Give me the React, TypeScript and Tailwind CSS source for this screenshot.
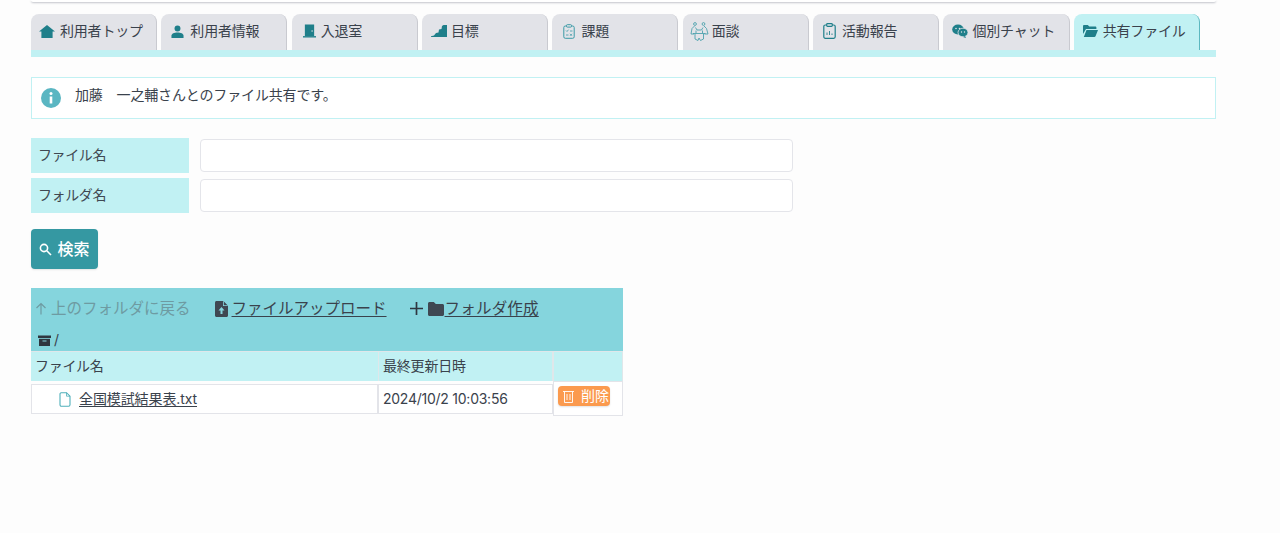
const font = { fontFamily: 'Inter, "Noto Sans CJK JP", sans-serif' };

const T = "#1f7f8a";

function Home() {
  return <svg width="16" height="13" viewBox="0 0 16 13"><path d="M8 0 16 6.500h-2.400V13H2.400V6.500H0z" fill={T} /></svg>;
}
function User() {
  return <svg width="13" height="13" viewBox="0 0 14 14"><circle cx="7" cy="3.800" r="3.200" fill={T} /><path d="M.5 14v-2.500C.5 9.300 3.500 8 7 8s6.500 1.300 6.500 3.500V14z" fill={T} /></svg>;
}
function Door() {
  return <svg width="13" height="14" viewBox="0 0 14 14"><path d="M2 0h10v12.500H2z" fill={T} /><path d="M0 12.500h14V14H0z" fill={T} /><circle cx="9.800" cy="7" r=".8" fill="#e2e3e8" /></svg>;
}
function Stairs() {
  return <svg width="16" height="12" viewBox="0 0 16 12"><path d="M16 0v12H0v-.8l3-.7L5 8l2.500-.5L8 4.500l2.500-.5.500-3 1.500-1z" fill={T} /></svg>;
}
function Task() {
  return <svg width="12" height="15" viewBox="0 0 12 15" fill="none" stroke="#3b9aa6" strokeWidth="1"><rect x=".8" y="2" width="10.400" height="12.300" rx="1.500" /><rect x="3.500" y=".7" width="5" height="2.400" rx=".8" fill="#e2e3e8" /><path d="M3 6.500l1 1 1.500-1.800M7 7h2.500M3 11h2.500M7 9.800l2 2M9 9.800l-2 2" strokeWidth=".8" /></svg>;
}
function Meet() {
  return <svg width="19" height="19" viewBox="0 0 19 19" fill="none" stroke="#3b9aa6" strokeWidth=".8"><circle cx="5" cy="2" r="1.400" /><circle cx="13.500" cy="2" r="1.400" /><path d="M4.500 4 2 6.500 1 12h3M14 4l2.500 2.500L18 12h-3.500M5.500 5.500 7 8h4.500L13 5.500M6 8.500V11M12.500 8.500V11M3 11.500h12.500M5 12v5l3 1.500 1-2.500 1.500 2.500 3-1.500v-5" /></svg>;
}
function Report() {
  return <svg width="13" height="16" viewBox="0 0 13 16" fill="none" stroke={T} strokeWidth="1.200"><rect x=".8" y="2" width="11.400" height="13.300" rx="1.500" /><rect x="3.700" y=".7" width="5.600" height="2.600" rx=".8" fill="#e2e3e8" /><path d="M4 12V9.500M6.500 12V8M9 12v-1.500" strokeWidth=".9" /></svg>;
}
function Chat() {
  return <svg width="16" height="14" viewBox="0 0 16 14"><ellipse cx="6" cy="5.500" rx="5.800" ry="5" fill={T} /><ellipse cx="11" cy="8.500" rx="5" ry="4.300" fill={T} stroke="#e2e3e8" strokeWidth=".8" /><path d="M13 12l1 2-3-1z" fill={T} /><circle cx="4" cy="4.500" r=".8" fill="#e2e3e8" /><circle cx="7.500" cy="4.500" r=".8" fill="#e2e3e8" /><circle cx="9.500" cy="8" r=".7" fill="#e2e3e8" /><circle cx="12.500" cy="8" r=".7" fill="#e2e3e8" /></svg>;
}
function FolderOpen() {
  return <svg width="15" height="12" viewBox="0 0 15 12"><path d="M0 1.200C0 .5.500 0 1.200 0h3.600l1.500 1.500h6c.6 0 1.100.5 1.100 1.100V4H3L0 9z" fill={T} /><path d="M3.500 5H15l-2.500 6.200c-.2.500-.6.800-1.100.8H.8z" fill={T} /></svg>;
}

const tabs: [string, React.ReactNode, string, boolean?][] = [
  ["利用者トップ", <Home />, "ml-0"],
  ["利用者情報", <User />, "ml-[2px]"],
  ["入退室", <Door />, "ml-[3px]"],
  ["目標", <Stairs />, "ml-[1px]"],
  ["課題", <Task />, "ml-[3px]"],
  ["面談", <Meet />, "-ml-[1px]"],
  ["活動報告", <Report />, "ml-[2px]"],
  ["個別チャット", <Chat />, "ml-[1px]"],
  ["共有ファイル", <FolderOpen />, "ml-[1px]", true],
];

function Tab({ label, icon, iconClass, active }: { label: string; icon: React.ReactNode; iconClass: string; active?: boolean }) {
  return (
    <div className={`flex h-9 w-[126.100px] items-center rounded-t-lg pl-[8px] pb-[2px] text-sm tracking-[-0.2px] text-[#3a424c] border-r ${active ? "bg-[#c1f1f3] border-[#5cb8c0]" : "bg-[#e2e3e8] border-[#c9cad0]"}`}>
      <span className="flex w-[21px] shrink-0 items-center"><span className={`flex ${iconClass}`}>{icon}</span></span>
      <span className="whitespace-nowrap">{label}</span>
    </div>
  );
}

function Field({ label }: { label: string }) {
  return (
    <div className="flex h-[35px] items-center gap-[11px]">
      <div className="flex h-full w-[158px] items-center bg-[#c1f1f3] pb-[2px] pl-[7px] text-sm tracking-[-0.4px] text-[#3f4852]">{label}</div>
      <div className="h-[33.500px] w-[593px] rounded border border-[#e4e5ea] bg-white" />
    </div>
  );
}

export default function App() {
  return (
    <div className="min-h-[533px] bg-[#fdfdfd] text-[#3a424c]" style={font}>
      <div className="ml-[31px] w-[1185px]">
        <div className="h-[2px] rounded-b bg-white shadow-[0_1px_2px_rgba(120,125,140,0.45)]" />
        <div className="mt-3 flex gap-[4.250px]">
          {tabs.map(([l, i, c, a]) => <Tab key={l} label={l} icon={i} iconClass={c} active={a} />)}
        </div>
        <div className="h-[7px] bg-[#c1f1f3]" />

        <div className="mt-5 flex h-[42px] items-center border border-[#c1f1f3] bg-white pl-[9px] text-sm">
          <svg width="20" height="20" viewBox="0 0 20 20" className="mt-[-1px]">
            <circle cx="10" cy="10" r="10" fill="#5ab6c2" />
            <circle cx="10" cy="5.500" r="1.500" fill="#fff" />
            <path d="M8.700 8.500h2.600v7H8.700z" fill="#fff" />
          </svg>
          <span className="ml-[14px] mb-[6px] tracking-[-0.15px]">加藤　一之輔さんとのファイル共有です。</span>
        </div>

        <div className="mt-[19px] flex flex-col gap-[5px]">
          <Field label="ファイル名" />
          <Field label="フォルダ名" />
        </div>

        <button className="mt-4 flex h-10 w-[67px] items-center justify-center gap-[5px] rounded bg-[#3598a2] text-base font-medium text-white shadow-[0_1px_2px_rgba(0,0,0,0.1)]">
          <svg width="13" height="13" viewBox="0 0 13 13" fill="none" stroke="#fff" strokeWidth="1.600"><circle cx="5" cy="5" r="3.600" /><path d="M7.800 7.800 12 12" /></svg>
          検索
        </button>

        <div className="mt-[19px] w-[592px]">
          <div className="h-[63px] bg-[#85d5dd]">
            <div className="flex h-[38px] items-center pl-[4px] pt-[3px] text-[15.500px]">
              <span className="flex items-center gap-[4px] text-[#6e9ba2]">
                <svg width="12" height="13" viewBox="0 0 12 13" fill="none" stroke="#6e9ba2" strokeWidth="1.200"><path d="M6 12.500V1.500M1.500 6 6 1.500 10.500 6" /></svg>
                上のフォルダに戻る
              </span>
              <span className="ml-[24px] flex items-center gap-[4px]">
                <svg width="13" height="16" viewBox="0 0 13 16"><path d="M1.500 0H8l5 5v9.500c0 .8-.7 1.500-1.500 1.500h-10C.7 16 0 15.300 0 14.500v-13C0 .7.700 0 1.500 0z" fill="#3f4852" /><path d="M6.500 6 9.500 9.500H7.500V13h-2V9.500h-2z" fill="#85d5dd" /><path d="M8 0v5h5z" fill="#85d5dd" /><path d="M8.800.5v3.700h3.700z" fill="#3f4852" /></svg>
                <span className="underline underline-offset-2">ファイルアップロード</span>
              </span>
              <span className="ml-[22px] flex items-center">
                <svg width="15" height="15" viewBox="0 0 15 15" stroke="#2f3740" strokeWidth="1.700"><path d="M7.500 1v13M1 7.500h13" /></svg>
                <svg width="16" height="14" viewBox="0 0 16 14" className="ml-[4px] mr-[1px]"><path d="M1.500 0h4.300L7.800 2h6.700c.8 0 1.500.7 1.500 1.500v9c0 .8-.7 1.500-1.500 1.500h-13C.7 14 0 13.300 0 12.500v-11C0 .7.700 0 1.500 0z" fill="#3f4852" /></svg>
                <span className="tracking-[0.2px] underline underline-offset-2">フォルダ作成</span>
              </span>
            </div>
            <div className="flex h-[25px] items-center pl-[7px] pt-[3px] text-sm">
              <svg width="13" height="11" viewBox="0 0 13 11"><path d="M0 .500h13v2.500H0z" fill="#2f3740" /><path d="M1 3.800h11V11H1z" fill="#2f3740" /><path d="M4.500 5.500h4v1h-4z" fill="#85d5dd" /></svg>
              <span className="ml-[3px]">/</span>
            </div>
          </div>
          <div className="flex text-sm">
            <div className="flex w-[347px] flex-col">
              <div className="flex h-[30px] items-center border-t border-[#dfe7ea] bg-[#c1f1f3] pb-[1px] pl-[4px] tracking-[-0.3px]">ファイル名</div>
              <div className="mt-[3px] flex h-[30px] items-center border border-[#e3e4e9] bg-white pl-[27px]">
                <svg width="13" height="15" viewBox="0 0 13 15" fill="none" stroke="#4fb0ba" strokeWidth="1.100"><path d="M2 .700h5.500l3.500 3.500v8.600c0 .8-.6 1.400-1.400 1.400H2.400C1.600 14.200 1 13.600 1 12.800V1.700z" /><path d="M7.500.700v3.500H11" strokeWidth=".8" /></svg>
                <span className="ml-[7px] tracking-[-0.1px] underline underline-offset-2">全国模試結果表.txt</span>
              </div>
            </div>
            <div className="flex w-[175px] flex-col">
              <div className="flex h-[30px] items-center border-x border-t border-[#dfe7ea] bg-[#c1f1f3] pb-[1px] pl-[4px] tracking-[-0.2px]">最終更新日時</div>
              <div className="mt-[3px] flex h-[30px] items-center border border-[#e3e4e9] bg-white pl-[4px] tracking-[-0.25px]">2024/10/2 10:03:56</div>
            </div>
            <div className="flex w-[70px] flex-col">
              <div className="h-[30px] border border-b-0 border-[#dfe7ea] bg-[#c1f1f3]" />
              <div className="h-[35px] border border-[#e3e4e9] bg-white pl-[4px] pt-[4px]">
                <div className="flex h-[20px] w-[52px] items-center rounded bg-[#fb9a4e] pl-[5px] text-sm text-white shadow-[0_1px_2px_rgba(0,0,0,0.12)]">
                  <svg width="11" height="13" viewBox="0 0 11 13" fill="none" stroke="#fff" strokeWidth=".9"><path d="M0 1.500h11M1.500 1.500v11h8v-11M4 4v6M7 4v6" /></svg>
                  <span className="ml-[7px] whitespace-nowrap">削除</span>
                </div>
              </div>
            </div>
          </div>
        </div>
      </div>
    </div>
  );
}
